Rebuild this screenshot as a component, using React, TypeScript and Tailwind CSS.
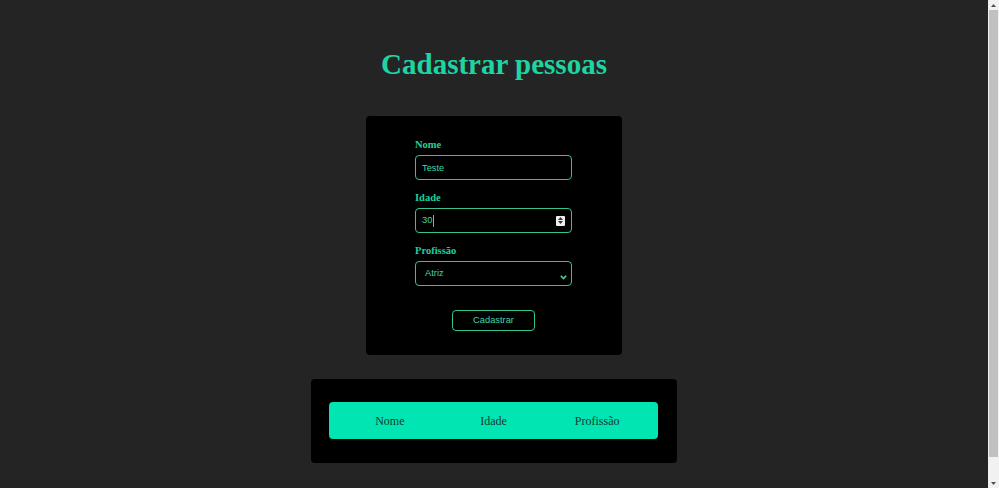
export default function App() {
  const labelCls =
    "block h-[12px] text-[10.5px] font-bold leading-[12px] text-[#1fcf9d]";
  const fieldCls =
    "mt-[4px] flex h-[25px] w-full items-center rounded-[4px] border border-[#34c393] bg-black font-['Liberation_Sans',Arial,sans-serif] text-[9.3px] text-[#3fd6a6] outline-none";

  return (
    <div className="flex h-screen bg-[#242424] font-['Liberation_Serif','Times_New_Roman',serif]">
      <main className="flex-1 overflow-y-auto pb-[48px] pt-[48px]">
        <h1 className="text-center text-[29px] font-bold leading-[33px] text-[#1ed4a2]">
          Cadastrar pessoas
        </h1>

        {/* Form card */}
        <form className="mx-auto mt-[35px] w-[256px] rounded-[4px] bg-black pb-[24px] pl-[49px] pr-[50px] pt-[23px]">
          <label className={labelCls}>Nome</label>
          <input readOnly value="Teste" className={`${fieldCls} px-[6px]`} />

          <label className={`${labelCls} mt-[12px]`}>Idade</label>
          <div className={`${fieldCls} px-[6px]`}>
            <span>30</span>
            <span className="ml-[1px] h-[12px] w-px bg-[#3fd6a6]" />
            <span className="ml-auto flex h-[10px] w-[9px] flex-col items-center justify-center gap-[1px] rounded-[1px] bg-[#efefef]">
              <svg width="5" height="3" viewBox="0 0 5 3">
                <path d="M0 3 L2.5 0 L5 3 Z" fill="#333" />
              </svg>
              <svg width="5" height="3" viewBox="0 0 5 3">
                <path d="M0 0 L2.5 3 L5 0 Z" fill="#333" />
              </svg>
            </span>
          </div>

          <label className={`${labelCls} mt-[12px]`}>Profissão</label>
          <div className="relative">
            <select
              defaultValue="Atriz"
              className={`${fieldCls} appearance-none pl-[9px]`}
            >
              <option>Atriz</option>
            </select>
            <svg
              className="pointer-events-none absolute right-[5px] top-[14px]"
              width="7"
              height="5"
              viewBox="0 0 7 5"
            >
              <path
                d="M0.8 0.8 L3.5 3.6 L6.2 0.8"
                fill="none"
                stroke="#3fd6a6"
                strokeWidth="1.6"
              />
            </svg>
          </div>

          <button
            type="button"
            className="mx-auto mt-[24px] block h-[21px] w-[83px] rounded-[4px] border border-[#34c393] bg-black font-['Liberation_Sans',Arial,sans-serif] text-[9.3px] text-[#3fd6a6]"
          >
            Cadastrar
          </button>
        </form>

        {/* Table card */}
        <div className="mx-auto mt-[24px] w-[366px] rounded-[4px] bg-black pb-[24px] pl-[18px] pr-[19px] pt-[23px]">
          <div className="grid h-[37px] grid-cols-3 items-center rounded-[4px] bg-[#00e5b1] px-[9px] text-center text-[12px] text-[#153b31]">
            <span>Nome</span>
            <span>Idade</span>
            <span>Profissão</span>
          </div>
        </div>
      </main>

      {/* Scrollbar */}
      <div className="flex w-[11px] flex-col bg-[#f1f1f1]">
        <div className="flex h-[10px] items-center justify-center">
          <svg width="5" height="3" viewBox="0 0 5 3">
            <path d="M0 3 L2.5 0 L5 3 Z" fill="#505050" />
          </svg>
        </div>
        <div className="mx-[1px] h-[447px] bg-[#c1c1c1]" />
        <div className="flex-1" />
        <div className="flex h-[10px] items-center justify-center">
          <svg width="5" height="3" viewBox="0 0 5 3">
            <path d="M0 0 L2.5 3 L5 0 Z" fill="#505050" />
          </svg>
        </div>
      </div>
    </div>
  );
}
